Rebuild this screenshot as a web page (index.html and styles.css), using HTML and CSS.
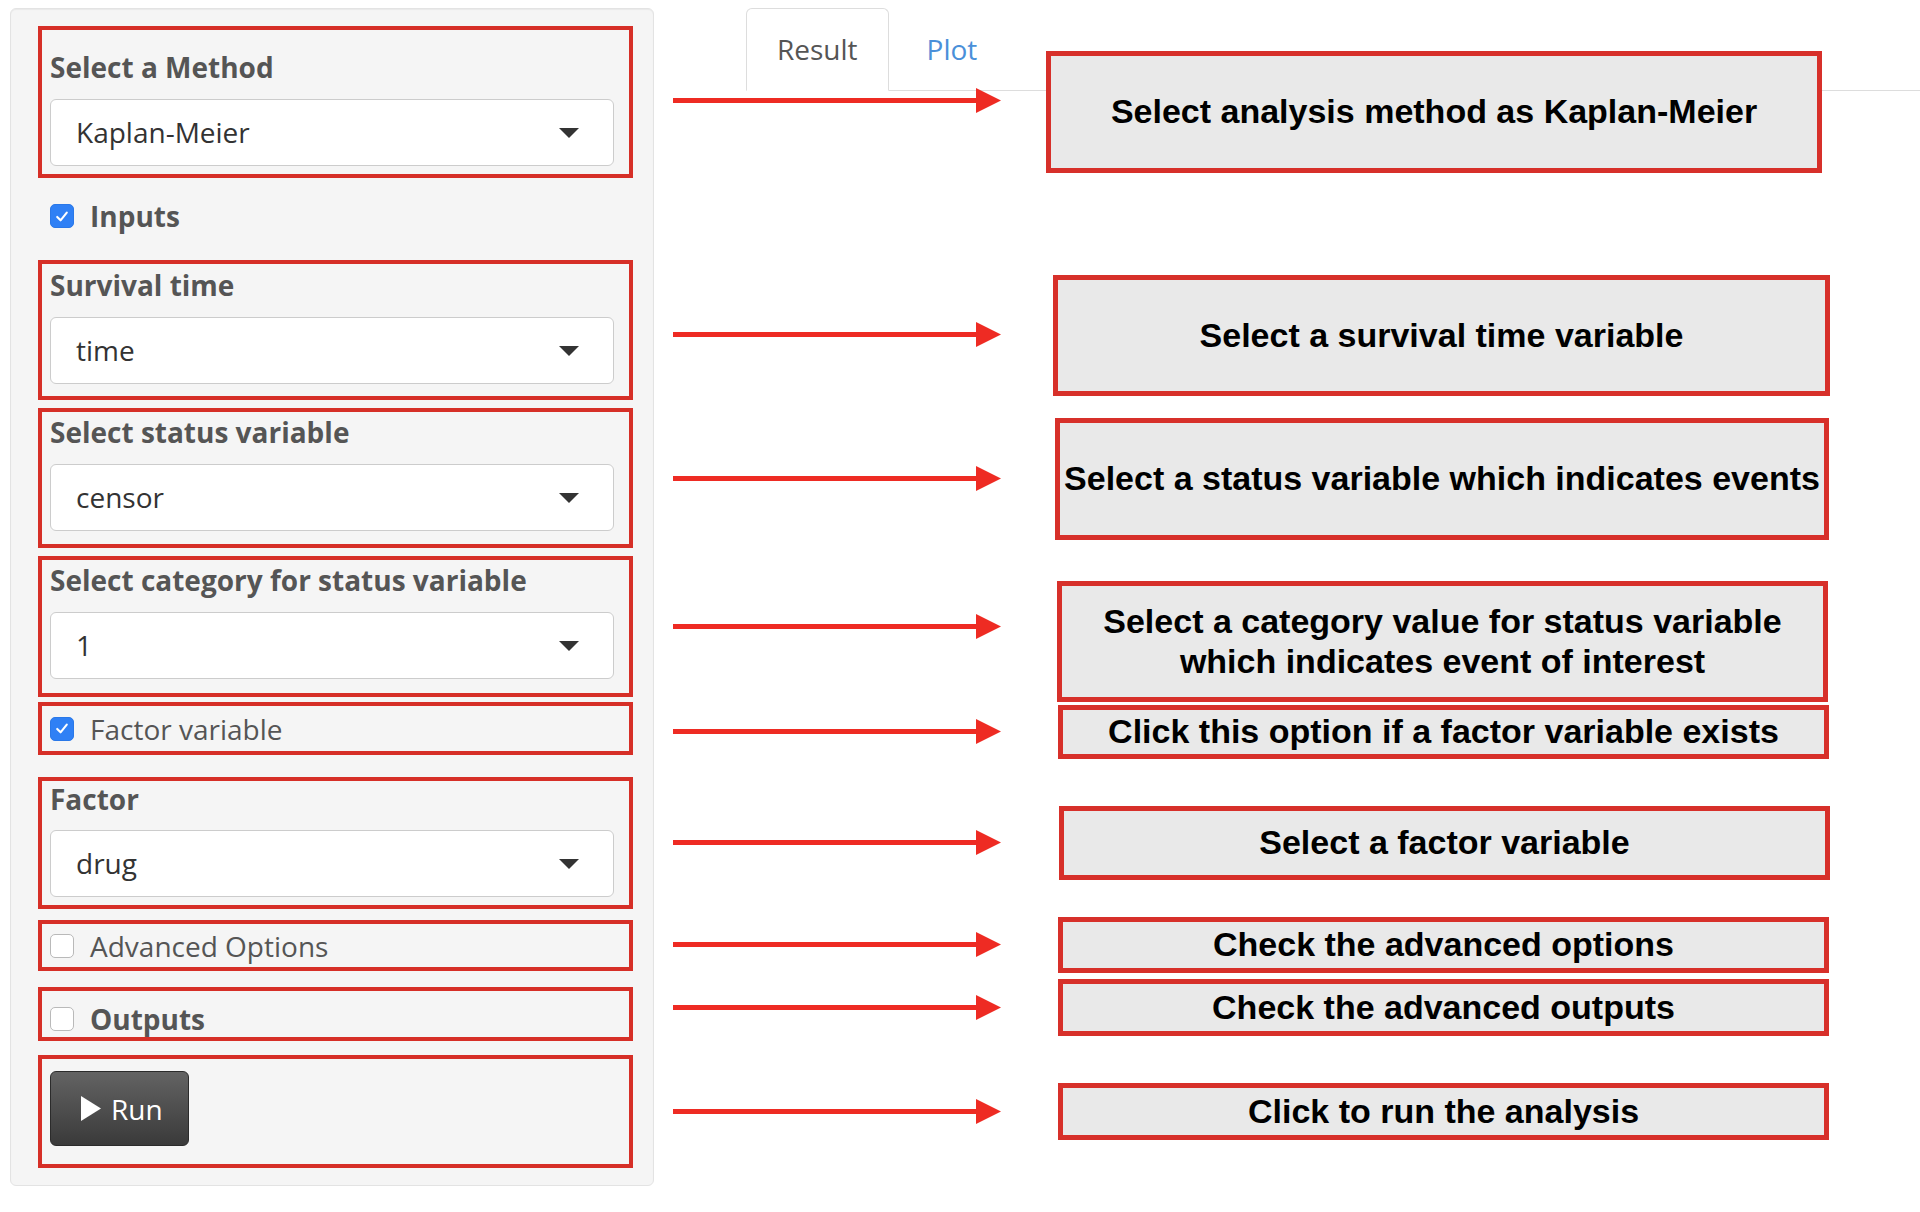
FILE: index.html
```html
<!DOCTYPE html>
<html lang="en">
<head>
<meta charset="utf-8">
<title>Kaplan-Meier survival analysis</title>
<link rel="stylesheet" href="styles.css">
</head>
<body>
<div class="page">
  <aside class="well">
    <div class="mark mark-method">
      <label class="ctl-label">Select a Method</label>
      <div class="select"><span>Kaplan-Meier</span><span class="caret"></span></div>
    </div>

    <div class="check-row check-inputs">
      <span class="cb cb-on"><svg viewBox="0 0 23 23" width="23" height="23"><polyline points="6.5,12 10,15.5 16.5,7.5" fill="none" stroke="#fff" stroke-width="2.2" stroke-linecap="round" stroke-linejoin="round"/></svg></span>
      <span class="check-text bold">Inputs</span>
    </div>

    <div class="mark mark-time">
      <label class="ctl-label">Survival time</label>
      <div class="select"><span>time</span><span class="caret"></span></div>
    </div>

    <div class="mark mark-status">
      <label class="ctl-label">Select status variable</label>
      <div class="select"><span>censor</span><span class="caret"></span></div>
    </div>

    <div class="mark mark-category">
      <label class="ctl-label">Select category for status variable</label>
      <div class="select"><span>1</span><span class="caret"></span></div>
    </div>

    <div class="mark mark-check mark-factorvar">
      <span class="cb cb-on"><svg viewBox="0 0 23 23" width="23" height="23"><polyline points="6.5,12 10,15.5 16.5,7.5" fill="none" stroke="#fff" stroke-width="2.2" stroke-linecap="round" stroke-linejoin="round"/></svg></span>
      <span class="check-text">Factor variable</span>
    </div>

    <div class="mark mark-factor">
      <label class="ctl-label">Factor</label>
      <div class="select"><span>drug</span><span class="caret"></span></div>
    </div>

    <div class="mark mark-check mark-advanced">
      <span class="cb"></span>
      <span class="check-text">Advanced Options</span>
    </div>

    <div class="mark mark-check mark-outputs">
      <span class="cb"></span>
      <span class="check-text bold">Outputs</span>
    </div>

    <div class="mark mark-run">
      <button class="run-btn" type="button">
        <svg class="play" viewBox="0 0 20 25" width="20" height="25"><polygon points="0,0 20,12.5 0,25" fill="#fff"/></svg>
        <span>Run</span>
      </button>
    </div>
  </aside>

  <main class="main">
    <ul class="tabs">
      <li class="tab tab-active">Result</li>
      <li class="tab">Plot</li>
    </ul>

    <div class="notes">
      <div class="arrows">
        <svg class="arrow" viewBox="0 0 328 25" width="328" height="25"><rect x="0" y="10" width="306" height="5" fill="#ee2b23"/><polygon points="303,0 328,12.5 303,25" fill="#ee2b23"/></svg>
        <svg class="arrow" viewBox="0 0 328 25" width="328" height="25"><rect x="0" y="10" width="306" height="5" fill="#ee2b23"/><polygon points="303,0 328,12.5 303,25" fill="#ee2b23"/></svg>
        <svg class="arrow" viewBox="0 0 328 25" width="328" height="25"><rect x="0" y="10" width="306" height="5" fill="#ee2b23"/><polygon points="303,0 328,12.5 303,25" fill="#ee2b23"/></svg>
        <svg class="arrow" viewBox="0 0 328 25" width="328" height="25"><rect x="0" y="10" width="306" height="5" fill="#ee2b23"/><polygon points="303,0 328,12.5 303,25" fill="#ee2b23"/></svg>
        <svg class="arrow" viewBox="0 0 328 25" width="328" height="25"><rect x="0" y="10" width="306" height="5" fill="#ee2b23"/><polygon points="303,0 328,12.5 303,25" fill="#ee2b23"/></svg>
        <svg class="arrow" viewBox="0 0 328 25" width="328" height="25"><rect x="0" y="10" width="306" height="5" fill="#ee2b23"/><polygon points="303,0 328,12.5 303,25" fill="#ee2b23"/></svg>
        <svg class="arrow" viewBox="0 0 328 25" width="328" height="25"><rect x="0" y="10" width="306" height="5" fill="#ee2b23"/><polygon points="303,0 328,12.5 303,25" fill="#ee2b23"/></svg>
        <svg class="arrow" viewBox="0 0 328 25" width="328" height="25"><rect x="0" y="10" width="306" height="5" fill="#ee2b23"/><polygon points="303,0 328,12.5 303,25" fill="#ee2b23"/></svg>
        <svg class="arrow" viewBox="0 0 328 25" width="328" height="25"><rect x="0" y="10" width="306" height="5" fill="#ee2b23"/><polygon points="303,0 328,12.5 303,25" fill="#ee2b23"/></svg>
      </div>
      <div class="boxes">
        <div class="note note-1">Select analysis method as Kaplan-Meier</div>
        <div class="note note-2">Select a survival time variable</div>
        <div class="note note-3">Select a status variable which indicates events</div>
        <div class="note note-4">Select a category value for status variable<br>which indicates event of interest</div>
        <div class="note note-5">Click this option if a factor variable exists</div>
        <div class="note note-6">Select a factor variable</div>
        <div class="note note-7">Check the advanced options</div>
        <div class="note note-8">Check the advanced outputs</div>
        <div class="note note-9">Click to run the analysis</div>
      </div>
    </div>
  </main>
</div>
</body>
</html>
```

FILE: styles.css
```css
* { box-sizing: border-box; }

html, body {
  margin: 0;
  padding: 0;
  background: #ffffff;
}

body {
  font-family: "Open Sans", "Noto Sans", "Liberation Sans", sans-serif;
  color: #333;
}

.page {
  display: flex;
  align-items: flex-start;
  padding-left: 10px;
  min-height: 1212px;
}

/* ---------- sidebar ---------- */
.well {
  width: 644px;
  margin-top: 8px;
  padding: 17px 20px 17px 27px;
  background: #f5f5f5;
  border: 1px solid #e3e3e3;
  border-radius: 6px;
  box-shadow: inset 0 1px 1px rgba(0, 0, 0, 0.05);
  display: flex;
  flex-direction: column;
}

.mark {
  border: 4px solid #d62f27;
  padding: 0 15px 0 8px;
}

.ctl-label {
  display: block;
  font-weight: 700;
  font-size: 28px;
  line-height: 40px;
  color: #555;
}

.select {
  height: 67px;
  margin-top: 12px;
  background: #fff;
  border: 1px solid #cccccc;
  border-radius: 6px;
  display: flex;
  align-items: center;
  justify-content: space-between;
  padding: 0 34px 2px 25px;
  font-size: 28px;
  color: #333;
}

.caret {
  width: 0;
  height: 0;
  border-left: 10px solid transparent;
  border-right: 10px solid transparent;
  border-top: 10px solid #333;
  margin-top: 2px;
}

.mark-method { padding-top: 17px; padding-bottom: 8px; }

.check-row {
  display: flex;
  align-items: center;
  height: 40px;
  padding-left: 12px;
}
.check-inputs { margin-top: 18px; }

.mark-time { margin-top: 24px; padding-top: 1px; padding-bottom: 12px; }
.mark-time .select { margin-top: 12px; }

.mark-status { margin-top: 8px; padding-bottom: 13px; }
.mark-category { margin-top: 8px; padding-bottom: 14px; }

.mark-check {
  display: flex;
  align-items: center;
}
.mark-factorvar { margin-top: 5px; height: 53px; }

.mark-factor { margin-top: 22px; padding-bottom: 8px; }
.mark-factor .ctl-label { line-height: 36px; }
.mark-factor .select { margin-top: 13px; }

.mark-advanced { margin-top: 11px; height: 51px; }
.mark-outputs { margin-top: 16px; height: 54px; padding-top: 10px; }

.mark-run { margin-top: 14px; padding-top: 12px; padding-bottom: 18px; }

.cb {
  flex: none;
  width: 24px;
  height: 24px;
  border-radius: 5px;
  background: #fff;
  border: 1px solid #b9b9b9;
  display: flex;
  align-items: center;
  justify-content: center;
}
.cb-on {
  background: #2f80f5;
  border-color: #2a78e8;
}
.cb svg { display: block; }

.check-text {
  margin-left: 16px;
  font-size: 28px;
  line-height: 40px;
  color: #555;
}
.bold { font-weight: 700; }

.run-btn {
  display: flex;
  align-items: center;
  width: 139px;
  height: 75px;
  padding: 0 0 0 30px;
  border: 1px solid #2b2b2b;
  border-radius: 6px;
  background: linear-gradient(#636363, #3a3a3a);
  color: #fff;
  font-family: "Open Sans", "Noto Sans", sans-serif;
  font-size: 28px;
  line-height: 40px;
}
.run-btn .play { display: block; margin-right: 10px; }

/* ---------- main ---------- */
.main {
  flex: 1;
  position: relative;
  min-height: 1212px;
}

.tabs {
  list-style: none;
  margin: 8px 0 0 92px;
  padding: 0;
  display: flex;
  border-bottom: 1px solid #dddddd;
}

.tab {
  margin-bottom: -1px;
  padding: 20px 30px 21px 35px;
  font-size: 28px;
  line-height: 40px;
  color: #4a90d9;
  border: 1px solid transparent;
  margin-left: 2px;
}
.tab-active {
  margin-left: 0;
  padding-left: 30px;
  color: #555;
  background: #fff;
  border-color: #dddddd;
  border-bottom-color: transparent;
  border-radius: 6px 6px 0 0;
}

/* annotation overlay */
.notes {
  position: absolute;
  top: 0;
  left: 0;
  display: flex;
  align-items: flex-start;
}

.arrows {
  margin-left: 19px;
  width: 328px;
  display: flex;
  flex-direction: column;
}
.arrow { display: block; flex: none; }
.arrow:nth-child(1) { margin-top: 88px; }
.arrow:nth-child(2) { margin-top: 209px; }
.arrow:nth-child(3) { margin-top: 119px; }
.arrow:nth-child(4) { margin-top: 123px; }
.arrow:nth-child(5) { margin-top: 80px; }
.arrow:nth-child(6) { margin-top: 86px; }
.arrow:nth-child(7) { margin-top: 77px; }
.arrow:nth-child(8) { margin-top: 38px; }
.arrow:nth-child(9) { margin-top: 79px; }

.boxes {
  margin-left: 57px;
  width: 771px;
  display: flex;
  flex-direction: column;
}

.note {
  width: 771px;
  border: 5px solid #d7302a;
  background: #e9e9e9;
  display: flex;
  align-items: center;
  justify-content: center;
  text-align: center;
  white-space: nowrap;
  font-family: "Liberation Sans", Arial, sans-serif;
  font-weight: 700;
  font-size: 34px;
  line-height: 40px;
  color: #000;
  padding-bottom: 2px;
}

.note-1 { margin-top: 51px; height: 122px; margin-left: -12px; width: 776px; }
.note-2 { margin-top: 102px; height: 121px; margin-left: -5px; width: 777px; }
.note-3 { margin-top: 22px; height: 122px; margin-left: -3px; width: 774px; }
.note-4 { margin-top: 41px; height: 121px; margin-left: -1px; width: 771px; }
.note-5 { margin-top: 3px; height: 54px; }
.note-6 { margin-top: 47px; height: 74px; margin-left: 1px; }
.note-7 { margin-top: 37px; height: 56px; }
.note-8 { margin-top: 6px; height: 57px; }
.note-9 { margin-top: 47px; height: 57px; }
```
